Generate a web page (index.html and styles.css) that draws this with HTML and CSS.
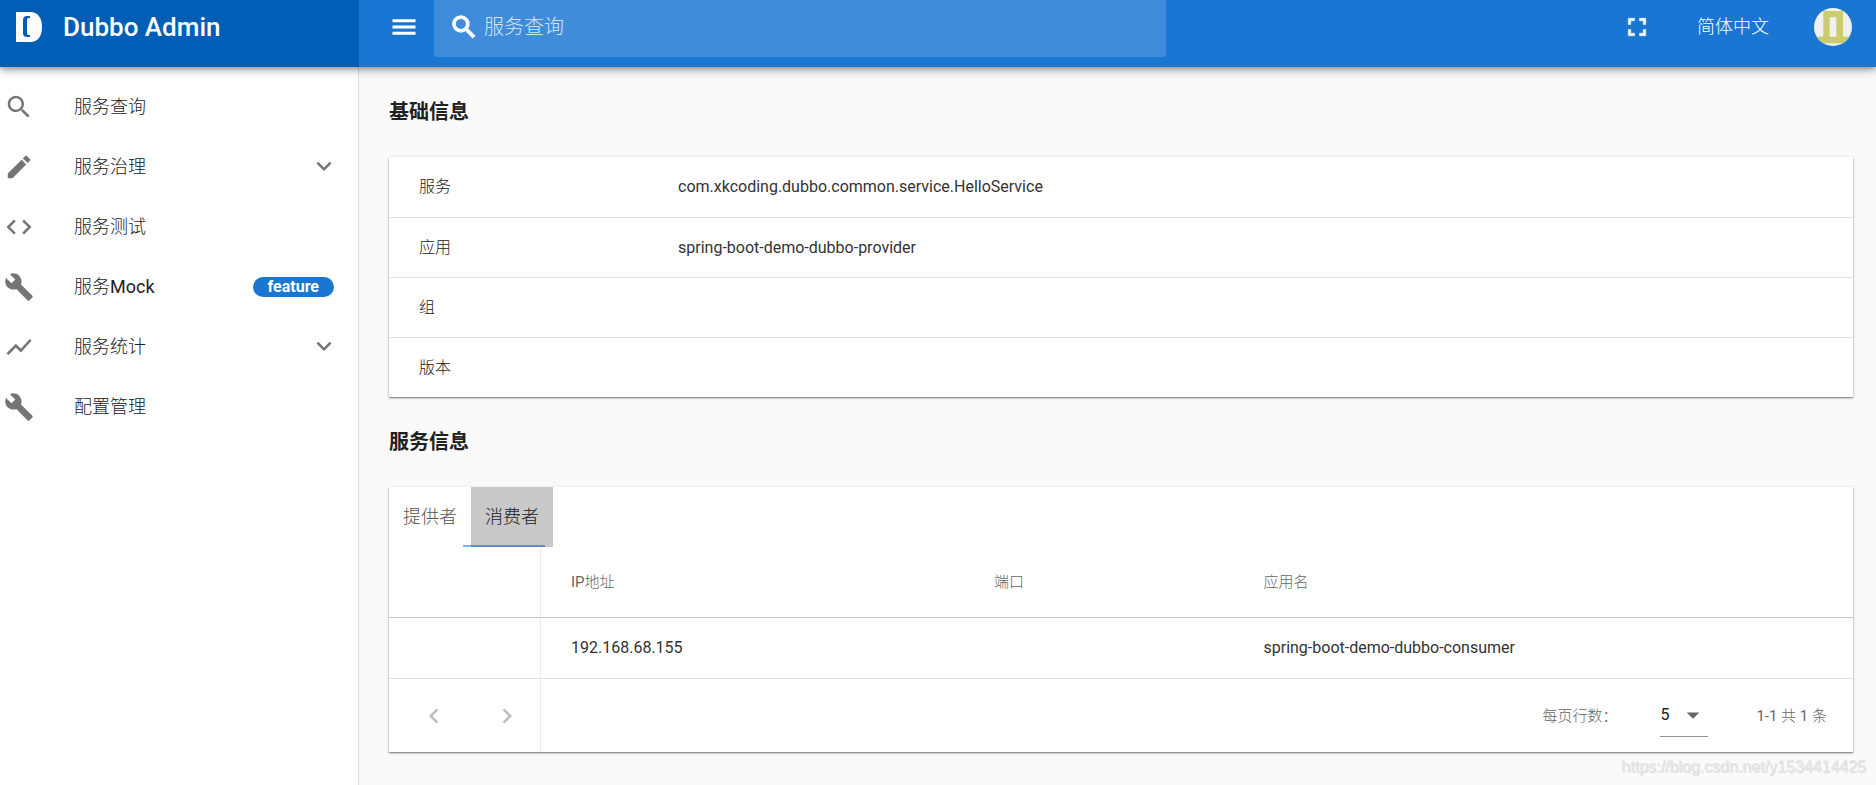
FILE: index.html
```html
<!DOCTYPE html>
<html lang="zh-CN">
<head>
<meta charset="utf-8">
<title>Dubbo Admin</title>
<link rel="stylesheet" href="styles.css">
</head>
<body>
<svg class="sprite" aria-hidden="true">
  <symbol id="i-search" viewBox="0 0 24 24"><path d="M15.5 14h-.79l-.28-.27C15.41 12.59 16 11.11 16 9.5 16 5.91 13.09 3 9.5 3S3 5.91 3 9.5 5.91 16 9.5 16c1.61 0 3.09-.59 4.23-1.57l.27.28v.79l5 4.99L20.49 19l-4.99-5zm-6 0C7.01 14 5 11.99 5 9.5S7.01 5 9.5 5 14 7.01 14 9.5 11.99 14 9.5 14z"/></symbol>
  <symbol id="i-edit" viewBox="0 0 24 24"><path d="M3 17.25V21h3.75L17.81 9.94l-3.75-3.75L3 17.25zM20.71 7.04c.39-.39.39-1.02 0-1.41l-2.34-2.34c-.39-.39-1.02-.39-1.41 0l-1.83 1.83 3.75 3.75 1.83-1.83z"/></symbol>
  <symbol id="i-code" viewBox="0 0 24 24"><path d="M9.4 16.6L4.8 12l4.6-4.6L8 6l-6 6 6 6 1.4-1.4zm5.2 0l4.6-4.6-4.6-4.6L16 6l6 6-6 6-1.4-1.4z"/></symbol>
  <symbol id="i-build" viewBox="0 0 24 24"><path d="M22.7 19l-9.1-9.1c.9-2.3.4-5-1.5-6.9-2-2-5-2.4-7.4-1.3L9 6 6 9 1.6 4.7C.4 7.1.9 10.1 2.9 12.1c1.9 1.9 4.6 2.4 6.9 1.5l9.1 9.1c.4.4 1 .4 1.4 0l2.3-2.3c.5-.4.5-1.1.1-1.4z"/></symbol>
  <symbol id="i-chart" viewBox="0 0 24 24"><path d="M3.5 18.49l6-6.01 4 4L22 6.92l-1.41-1.41-7.09 7.97-4-4L2 16.99z"/></symbol>
  <symbol id="i-down" viewBox="0 0 24 24"><path d="M7.41 7.84L12 12.42l4.59-4.58L18 9.25l-6 6-6-6z"/></symbol>
  <symbol id="i-menu" viewBox="0 0 24 24"><path d="M3 18h18v-2H3v2zm0-5h18v-2H3v2zm0-7v2h18V6H3z"/></symbol>
  <symbol id="i-full" viewBox="0 0 24 24"><path d="M7 14H5v5h5v-2H7v-3zm-2-4h2V7h3V5H5v5zm12 7h-3v2h5v-5h-2v3zM14 5v2h3v3h2V5h-5z"/></symbol>
  <symbol id="i-left" viewBox="0 0 24 24"><path d="M15.41 7.41L14 6l-6 6 6 6 1.41-1.41L10.83 12z"/></symbol>
  <symbol id="i-right" viewBox="0 0 24 24"><path d="M10 6L8.59 7.41 13.17 12l-4.58 4.59L10 18l6-6z"/></symbol>
  <symbol id="i-drop" viewBox="0 0 24 24"><path d="M7 10l5 5 5-5z"/></symbol>
</svg>

<header class="topbar">
  <div class="brand">
    <svg class="brand-logo" viewBox="0 0 27 30"><path fill="#fff" fill-rule="evenodd" d="M0 0H14C22 0 26 6 26 15S22 30 14 30H0zM14 4H11Q7 4 7 8V21Q7 25 11 25H14V23H12.500Q11 23 11 21V8Q11 6 12.500 6H14z"/></svg>
    <span class="brand-name">Dubbo Admin</span>
  </div>
  <div class="toolbar">
    <button class="icon-button" type="button" aria-label="菜单"><svg class="icon icon-medium"><use href="#i-menu"/></svg></button>
    <label class="search">
      <svg class="icon icon-strong"><use href="#i-search"/></svg>
      <input class="search-input" type="text" placeholder="服务查询" aria-label="服务查询">
    </label>
    <div class="tools">
      <button class="icon-button" type="button" aria-label="全屏"><svg class="icon icon-medium"><use href="#i-full"/></svg></button>
      <button class="language" type="button">简体中文</button>
      <button class="icon-button" type="button" aria-label="用户">
        <svg class="avatar" viewBox="0 0 38 38"><rect width="38" height="38" fill="#f0f0f0"/><path fill="#cccb70" fill-rule="evenodd" d="M9.3 3H29V28.7H38V35.3H0V28.7H9.3zM15.7 9.3V28.7H22.3V9.3z"/></svg>
      </button>
    </div>
  </div>
</header>

<div class="layout">
  <nav class="drawer">
    <a class="nav-item" href="#"><svg class="icon"><use href="#i-search"/></svg><span class="nav-text">服务查询</span></a>
    <a class="nav-item" href="#"><svg class="icon"><use href="#i-edit"/></svg><span class="nav-text">服务治理</span><svg class="icon icon-chevron"><use href="#i-down"/></svg></a>
    <a class="nav-item" href="#"><svg class="icon"><use href="#i-code"/></svg><span class="nav-text">服务测试</span></a>
    <a class="nav-item" href="#"><svg class="icon"><use href="#i-build"/></svg><span class="nav-text">服务Mock</span><span class="chip">feature</span></a>
    <a class="nav-item" href="#"><svg class="icon"><use href="#i-chart"/></svg><span class="nav-text">服务统计</span><svg class="icon icon-chevron"><use href="#i-down"/></svg></a>
    <a class="nav-item" href="#"><svg class="icon"><use href="#i-build"/></svg><span class="nav-text">配置管理</span></a>
  </nav>

  <main class="content">
    <h2 class="section-title">基础信息</h2>
    <div class="card">
      <table class="table info-table">
        <tbody>
          <tr><th scope="row">服务</th><td>com.xkcoding.dubbo.common.service.HelloService</td></tr>
          <tr><th scope="row">应用</th><td>spring-boot-demo-dubbo-provider</td></tr>
          <tr><th scope="row">组</th><td></td></tr>
          <tr><th scope="row">版本</th><td></td></tr>
        </tbody>
      </table>
    </div>

    <h2 class="section-title">服务信息</h2>
    <div class="card">
      <div class="tabs" role="tablist">
        <span class="tab-slider"></span>
        <button class="tab" type="button" role="tab" aria-selected="false">提供者</button>
        <button class="tab tab-active" type="button" role="tab" aria-selected="true">消费者</button>
      </div>
      <table class="table service-table">
        <colgroup><col class="col-blank"><col class="col-ip"><col class="col-port"><col></colgroup>
        <thead>
          <tr><td></td><th scope="col">IP地址</th><th scope="col">端口</th><th scope="col">应用名</th></tr>
        </thead>
        <tbody>
          <tr><td></td><td>192.168.68.155</td><td></td><td>spring-boot-demo-dubbo-consumer</td></tr>
        </tbody>
        <tfoot>
          <tr>
            <td>
              <div class="pager">
                <button class="icon-button" type="button" aria-label="上一页" disabled><svg class="icon"><use href="#i-left"/></svg></button>
                <button class="icon-button" type="button" aria-label="下一页" disabled><svg class="icon"><use href="#i-right"/></svg></button>
              </div>
            </td>
            <td colspan="3">
              <div class="page-info">
                <div class="rows-field">
                  <label for="rows">每页行数：</label>
                  <span class="rows-select">
                    <select id="rows"><option>5</option><option>10</option><option>25</option></select>
                    <svg class="icon"><use href="#i-drop"/></svg>
                  </span>
                </div>
                <span>1-1 共 1 条</span>
              </div>
            </td>
          </tr>
        </tfoot>
      </table>
    </div>
  </main>
</div>
<div class="watermark">https://blog.csdn.net/y1534414425</div>
</body>
</html>
```
FILE: styles.css
```css
* {
  box-sizing: border-box;
}

body {
  margin: 0;
  min-height: 100vh;
  display: flex;
  flex-direction: column;
  position: relative;
  background: #fafafa;
  color: #212121;
  font: 16px/24px Roboto, "Noto Sans CJK SC Light", "Noto Sans CJK SC", sans-serif;
}

button,
input,
select {
  font: inherit;
  color: inherit;
  background: none;
  border: 0;
  padding: 0;
  margin: 0;
}

.sprite {
  display: none;
}

.icon {
  display: block;
  flex: none;
  width: 30px;
  height: 30px;
  fill: currentColor;
}

.icon-strong {
  stroke: currentColor;
}

.icon-medium {
  stroke: currentColor;
  stroke-width: 0.4;
}

.icon-button {
  display: block;
}

/* Top bar */
.topbar {
  display: flex;
  height: 67px;
  position: relative;
  z-index: 1;
  color: #fff;
  background: #1976d2;
  box-shadow: 0 2px 5px rgba(0, 0, 0, 0.3), 0 4px 10px rgba(0, 0, 0, 0.2);
}

.brand {
  display: flex;
  align-items: center;
  gap: 20px;
  width: 359px;
  flex: none;
  padding: 0 0 13px 16px;
  background: #005eb6;
}

.brand-logo {
  width: 27px;
  height: 30px;
}

.brand-name {
  font-size: 26px;
  font-weight: 500;
}

.toolbar {
  display: flex;
  flex: 1;
  gap: 15px;
  padding: 0 24px 0 30px;
}

.toolbar > .icon-button {
  padding-bottom: 13px;
}

.search {
  display: flex;
  align-items: center;
  gap: 5px;
  width: 50%;
  height: 57px;
  padding: 0 15px 3px;
  border-radius: 0 0 3px 3px;
  background: #3f8cda;
}

.search-input {
  flex: 1;
  min-width: 0;
  font-size: 20px;
  outline: 0;
}

.search-input::placeholder {
  color: #d4e5f7;
  opacity: 1;
}

.tools {
  display: flex;
  align-items: center;
  gap: 45px;
  margin-left: auto;
  padding-bottom: 13px;
}

.language {
  font-size: 18px;
}

.avatar {
  display: block;
  width: 38px;
  height: 38px;
  border-radius: 50%;
}

/* Layout */
.layout {
  display: flex;
  flex: 1;
}

.drawer {
  width: 359px;
  flex: none;
  padding-top: 10px;
  background: #fff;
  border-right: 1px solid #e0e0e0;
}

.nav-item {
  display: flex;
  align-items: center;
  height: 60px;
  padding: 0 24px 0 4px;
  color: #212121;
  font-size: 18px;
  text-decoration: none;
}

.nav-item .icon {
  color: #757575;
}

.nav-item .icon-chevron {
  margin-right: -5px;
}

.nav-text {
  flex: 1;
  padding-left: 40px;
}

.chip {
  padding: 0 15px;
  border-radius: 10px;
  background: #1976d2;
  color: #fff;
  font-size: 16px;
  font-weight: 700;
  line-height: 20px;
}

.content {
  flex: 1;
  min-width: 0;
  padding: 0 23px 30px 30px;
}

.section-title {
  margin: 0;
  font-family: Roboto, "Noto Sans CJK SC", sans-serif;
  font-size: 20px;
  font-weight: 700;
  line-height: 90px;
}

.card {
  background: #fff;
  box-shadow: 0 1px 1px rgba(0, 0, 0, 0.3), 0 1px 3px rgba(0, 0, 0, 0.25);
}

/* Tables */
.table {
  width: 100%;
  table-layout: fixed;
  border-collapse: separate;
  border-spacing: 0;
}

.table th,
.table td {
  height: 60px;
  padding: 0 30px;
  text-align: left;
  font-weight: 400;
}

.table tr + tr > *,
.table tfoot td {
  border-top: 1px solid #e0e0e0;
}

.info-table th {
  width: 259px;
}

.info-table td,
.service-table tbody td {
  color: #333;
}

.service-table thead tr > * {
  height: 71px;
  color: #666;
  font-size: 15px;
  border-bottom: 1px solid #c4c4c4;
}

.service-table td:first-child {
  border-right: 1px solid #ececec;
}

.col-blank {
  width: 152px;
}

.col-ip {
  width: 28.9%;
}

.col-port {
  width: 18.4%;
}

.service-table tfoot td {
  height: 74px;
  padding-right: 26px;
  color: #666;
  font-size: 15px;
}

/* Tabs */
.tabs {
  display: flex;
  position: relative;
}

.tab {
  height: 60px;
  padding: 0 14px;
  color: #555;
  font-size: 18px;
}

.tab-active {
  position: relative;
  color: #212121;
  background: rgba(0, 0, 0, 0.21);
}

.tab-slider {
  position: absolute;
  left: 74px;
  bottom: 0;
  width: 82px;
  height: 2px;
  background: #82b1ff;
}

/* Pagination */
.pager {
  display: flex;
  gap: 43px;
  color: #bdbdbd;
}

.page-info {
  display: flex;
  align-items: center;
  justify-content: flex-end;
  gap: 48px;
}

.rows-field {
  display: flex;
  align-items: center;
  gap: 43px;
}

.rows-select {
  display: flex;
  align-items: center;
  position: relative;
  width: 48px;
  height: 42px;
  border-bottom: 1px solid #949494;
}

.rows-select select {
  width: 100%;
  appearance: none;
  color: #212121;
  font-size: 16px;
  outline: 0;
}

.rows-select .icon {
  position: absolute;
  right: 0;
  pointer-events: none;
}

.watermark {
  position: absolute;
  right: 10px;
  bottom: 6px;
  z-index: 2;
  color: #e6e6e6;
  font: 16px/24px "Liberation Sans", Arial, sans-serif;
  text-shadow: 1px 1px 1px #d8d8d8;
}
```
